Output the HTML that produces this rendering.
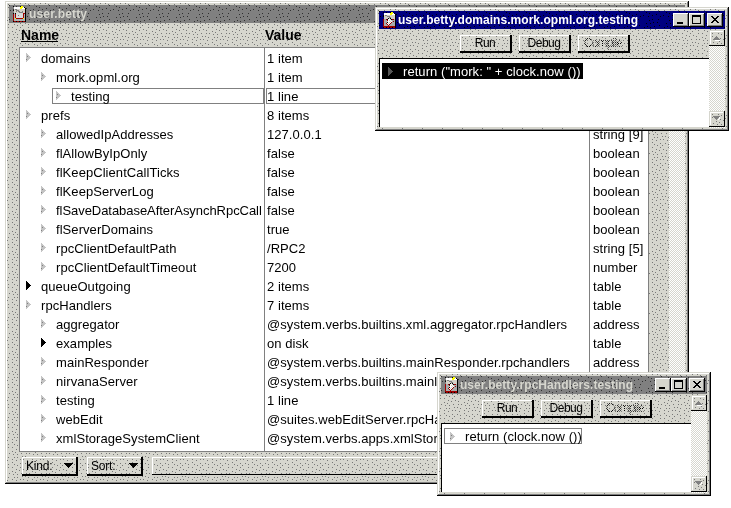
<!DOCTYPE html><html><head><meta charset="utf-8"><style>html,body{margin:0;padding:0;background:#fff;width:731px;height:508px;overflow:hidden;position:relative}div,svg{position:absolute}</style></head><body><svg width="0" height="0" style="position:absolute"><defs><pattern id="pf" width="20" height="20" patternUnits="userSpaceOnUse"><rect width="20" height="20" fill="#d6d6ce"/><g fill="#777777"><rect x="7" y="18" width="1" height="1"/><rect x="17" y="4" width="1" height="1"/><rect x="11" y="19" width="1" height="1"/><rect x="15" y="18" width="1" height="1"/><rect x="2" y="19" width="1" height="1"/><rect x="0" y="15" width="1" height="1"/><rect x="7" y="6" width="1" height="1"/><rect x="17" y="15" width="1" height="1"/><rect x="12" y="4" width="1" height="1"/><rect x="16" y="12" width="1" height="1"/><rect x="0" y="2" width="1" height="1"/><rect x="1" y="9" width="1" height="1"/><rect x="12" y="13" width="1" height="1"/><rect x="15" y="6" width="1" height="1"/><rect x="8" y="13" width="1" height="1"/><rect x="7" y="10" width="1" height="1"/><rect x="18" y="18" width="1" height="1"/><rect x="3" y="6" width="1" height="1"/><rect x="18" y="8" width="1" height="1"/><rect x="9" y="3" width="1" height="1"/><rect x="15" y="2" width="1" height="1"/><rect x="1" y="12" width="1" height="1"/><rect x="10" y="11" width="1" height="1"/><rect x="4" y="12" width="1" height="1"/><rect x="11" y="8" width="1" height="1"/><rect x="14" y="9" width="1" height="1"/><rect x="9" y="16" width="1" height="1"/><rect x="3" y="3" width="1" height="1"/><rect x="7" y="1" width="1" height="1"/><rect x="3" y="16" width="1" height="1"/><rect x="12" y="16" width="1" height="1"/></g></pattern><pattern id="pg" width="20" height="20" patternUnits="userSpaceOnUse"><rect width="20" height="20" fill="#808080"/><g fill="#303030"><rect x="19" y="8" width="1" height="1"/><rect x="11" y="16" width="1" height="1"/><rect x="0" y="14" width="1" height="1"/><rect x="7" y="1" width="1" height="1"/><rect x="7" y="12" width="1" height="1"/><rect x="17" y="3" width="1" height="1"/><rect x="13" y="8" width="1" height="1"/><rect x="4" y="19" width="1" height="1"/><rect x="4" y="4" width="1" height="1"/><rect x="0" y="0" width="1" height="1"/><rect x="10" y="9" width="1" height="1"/><rect x="10" y="2" width="1" height="1"/><rect x="15" y="15" width="1" height="1"/><rect x="11" y="12" width="1" height="1"/><rect x="1" y="5" width="1" height="1"/><rect x="14" y="11" width="1" height="1"/><rect x="18" y="11" width="1" height="1"/><rect x="16" y="19" width="1" height="1"/><rect x="9" y="5" width="1" height="1"/><rect x="13" y="4" width="1" height="1"/><rect x="5" y="16" width="1" height="1"/><rect x="8" y="15" width="1" height="1"/></g></pattern><pattern id="pb" width="20" height="20" patternUnits="userSpaceOnUse"><rect width="20" height="20" fill="#000080"/><g fill="#000000"><rect x="19" y="8" width="1" height="1"/><rect x="11" y="16" width="1" height="1"/><rect x="0" y="14" width="1" height="1"/><rect x="7" y="1" width="1" height="1"/><rect x="7" y="12" width="1" height="1"/><rect x="17" y="3" width="1" height="1"/><rect x="13" y="8" width="1" height="1"/><rect x="4" y="19" width="1" height="1"/><rect x="4" y="4" width="1" height="1"/><rect x="0" y="0" width="1" height="1"/><rect x="10" y="9" width="1" height="1"/><rect x="10" y="2" width="1" height="1"/><rect x="15" y="15" width="1" height="1"/><rect x="11" y="12" width="1" height="1"/><rect x="1" y="5" width="1" height="1"/><rect x="14" y="11" width="1" height="1"/><rect x="18" y="11" width="1" height="1"/><rect x="16" y="19" width="1" height="1"/><rect x="9" y="5" width="1" height="1"/><rect x="13" y="4" width="1" height="1"/><rect x="5" y="16" width="1" height="1"/><rect x="8" y="15" width="1" height="1"/></g></pattern><pattern id="pc" width="2" height="2" patternUnits="userSpaceOnUse"><rect width="2" height="2" fill="#ffffff"/><rect x="1" y="0" width="1" height="1" fill="#d6d6ce"/><rect x="0" y="1" width="1" height="1" fill="#d6d6ce"/></pattern></defs></svg><svg style="position:absolute;left:5px;top:1px" width="684" height="483" shape-rendering="crispEdges"><rect width="684" height="483" fill="url(#pf)"/></svg><div style="position:absolute;left:5px;top:1px;width:684px;height:1px;background:#d6d6ce"></div><div style="position:absolute;left:5px;top:1px;width:1px;height:483px;background:#d6d6ce"></div><div style="position:absolute;left:6px;top:2px;width:682px;height:1px;background:#fff"></div><div style="position:absolute;left:6px;top:2px;width:1px;height:481px;background:#fff"></div><div style="position:absolute;left:6px;top:482px;width:682px;height:1px;background:#808080"></div><div style="position:absolute;left:687px;top:2px;width:1px;height:481px;background:#808080"></div><div style="position:absolute;left:5px;top:483px;width:684px;height:1px;background:#000"></div><div style="position:absolute;left:688px;top:1px;width:1px;height:483px;background:#000"></div><svg style="position:absolute;left:9px;top:5px" width="676" height="18" shape-rendering="crispEdges"><rect width="676" height="18" fill="url(#pg)"/></svg><svg style="position:absolute;left:13px;top:6px" width="13" height="16" shape-rendering="crispEdges"><rect x="0" y="0" width="1" height="1" fill="#000"/><rect x="7" y="0" width="1" height="1" fill="#000"/><rect x="8" y="0" width="2" height="1" fill="#ffff00"/><rect x="1" y="1" width="6" height="1" fill="#fff"/><rect x="7" y="1" width="3" height="1" fill="#ffff00"/><rect x="10" y="1" width="1" height="1" fill="#fff"/><rect x="11" y="1" width="1" height="1" fill="#000"/><rect x="1" y="2" width="6" height="1" fill="#fff"/><rect x="7" y="2" width="2" height="1" fill="#ffff00"/><rect x="9" y="2" width="3" height="1" fill="#fff"/><rect x="12" y="2" width="1" height="1" fill="#000"/><rect x="1" y="3" width="1" height="1" fill="#d4d0c8"/><rect x="2" y="3" width="2" height="1" fill="#808080"/><rect x="4" y="3" width="8" height="1" fill="#d4d0c8"/><rect x="12" y="3" width="1" height="1" fill="#000"/><rect x="0" y="4" width="1" height="1" fill="#000"/><rect x="1" y="4" width="2" height="1" fill="#d4d0c8"/><rect x="3" y="4" width="3" height="1" fill="#808080"/><rect x="6" y="4" width="6" height="1" fill="#d4d0c8"/><rect x="12" y="4" width="1" height="1" fill="#000"/><rect x="1" y="5" width="2" height="1" fill="#d4d0c8"/><rect x="3" y="5" width="1" height="1" fill="#808080"/><rect x="4" y="5" width="1" height="1" fill="#d4d0c8"/><rect x="5" y="5" width="2" height="1" fill="#808080"/><rect x="7" y="5" width="2" height="1" fill="#d4d0c8"/><rect x="9" y="5" width="1" height="1" fill="#808080"/><rect x="10" y="5" width="2" height="1" fill="#d4d0c8"/><rect x="12" y="5" width="1" height="1" fill="#000"/><rect x="1" y="6" width="5" height="1" fill="#d4d0c8"/><rect x="6" y="6" width="4" height="1" fill="#808080"/><rect x="10" y="6" width="2" height="1" fill="#d4d0c8"/><rect x="12" y="6" width="1" height="1" fill="#000"/><rect x="0" y="7" width="1" height="1" fill="#000"/><rect x="1" y="7" width="1" height="1" fill="#a8b4b4"/><rect x="2" y="7" width="1" height="1" fill="#000"/><rect x="3" y="7" width="7" height="1" fill="#d8dcdc"/><rect x="10" y="7" width="2" height="1" fill="#a00000"/><rect x="12" y="7" width="1" height="1" fill="#000"/><rect x="0" y="8" width="1" height="1" fill="#a00000"/><rect x="1" y="8" width="1" height="1" fill="#a8b4b4"/><rect x="2" y="8" width="1" height="1" fill="#a00000"/><rect x="3" y="8" width="7" height="1" fill="#d8dcdc"/><rect x="10" y="8" width="1" height="1" fill="#a00000"/><rect x="11" y="8" width="1" height="1" fill="#a8b4b4"/><rect x="12" y="8" width="1" height="1" fill="#000"/><rect x="0" y="9" width="1" height="1" fill="#a00000"/><rect x="1" y="9" width="1" height="1" fill="#a8b4b4"/><rect x="2" y="9" width="1" height="1" fill="#a00000"/><rect x="3" y="9" width="2" height="1" fill="#d8dcdc"/><rect x="5" y="9" width="1" height="1" fill="#808080"/><rect x="6" y="9" width="4" height="1" fill="#d8dcdc"/><rect x="10" y="9" width="1" height="1" fill="#a00000"/><rect x="11" y="9" width="1" height="1" fill="#a8b4b4"/><rect x="12" y="9" width="1" height="1" fill="#000"/><rect x="0" y="10" width="1" height="1" fill="#a00000"/><rect x="1" y="10" width="1" height="1" fill="#a8b4b4"/><rect x="2" y="10" width="1" height="1" fill="#a00000"/><rect x="3" y="10" width="7" height="1" fill="#d8dcdc"/><rect x="10" y="10" width="1" height="1" fill="#a00000"/><rect x="11" y="10" width="1" height="1" fill="#a8b4b4"/><rect x="12" y="10" width="1" height="1" fill="#000"/><rect x="0" y="11" width="1" height="1" fill="#a00000"/><rect x="1" y="11" width="1" height="1" fill="#a8b4b4"/><rect x="2" y="11" width="1" height="1" fill="#a00000"/><rect x="3" y="11" width="7" height="1" fill="#d8dcdc"/><rect x="10" y="11" width="1" height="1" fill="#a00000"/><rect x="11" y="11" width="1" height="1" fill="#a8b4b4"/><rect x="12" y="11" width="1" height="1" fill="#000"/><rect x="0" y="12" width="1" height="1" fill="#a00000"/><rect x="1" y="12" width="1" height="1" fill="#a8b4b4"/><rect x="2" y="12" width="1" height="1" fill="#ffff00"/><rect x="3" y="12" width="7" height="1" fill="#a00000"/><rect x="10" y="12" width="1" height="1" fill="#ffff00"/><rect x="11" y="12" width="1" height="1" fill="#a8b4b4"/><rect x="12" y="12" width="1" height="1" fill="#000"/><rect x="0" y="13" width="1" height="1" fill="#a00000"/><rect x="1" y="13" width="11" height="1" fill="#a8b4b4"/><rect x="12" y="13" width="1" height="1" fill="#000"/><rect x="0" y="14" width="1" height="1" fill="#a00000"/><rect x="1" y="14" width="11" height="1" fill="#a8b4b4"/><rect x="12" y="14" width="1" height="1" fill="#000"/><rect x="0" y="15" width="1" height="1" fill="#000"/><rect x="1" y="15" width="2" height="1" fill="#a00000"/><rect x="3" y="15" width="1" height="1" fill="#000"/><rect x="4" y="15" width="2" height="1" fill="#a00000"/><rect x="6" y="15" width="1" height="1" fill="#000"/><rect x="7" y="15" width="2" height="1" fill="#a00000"/><rect x="9" y="15" width="1" height="1" fill="#000"/><rect x="10" y="15" width="2" height="1" fill="#a00000"/><rect x="12" y="15" width="1" height="1" fill="#000"/></svg><div style="position:absolute;left:29px;top:7px;line-height:12px;white-space:nowrap;will-change:transform;font:bold 12px 'Liberation Sans',sans-serif;color:#d6d6ce;letter-spacing:0.15px">user.betty</div><div style="position:absolute;left:21px;top:27px;line-height:14px;white-space:nowrap;will-change:transform;font:bold 14px 'Liberation Sans',sans-serif;color:#000;">Name</div><div style="position:absolute;left:21px;top:41px;width:37px;height:1px;background:#000"></div><div style="position:absolute;left:265px;top:27px;line-height:14px;white-space:nowrap;will-change:transform;font:bold 14px 'Liberation Sans',sans-serif;color:#000;">Value</div><div style="position:absolute;left:593px;top:27px;line-height:14px;white-space:nowrap;will-change:transform;font:bold 14px 'Liberation Sans',sans-serif;color:#000;">Kind</div><div style="position:absolute;left:19px;top:47px;width:630px;height:405px;box-sizing:border-box;background:#fff;border:1px solid #808080"></div><div style="position:absolute;left:264px;top:48px;width:1px;height:403px;background:#808080"></div><div style="position:absolute;left:589px;top:48px;width:1px;height:403px;background:#808080"></div><svg style="position:absolute;left:26px;top:53px" width="5" height="9" shape-rendering="crispEdges"><path fill="#c4c4c4" d="M0 0h1v9h-1zM1 1h1v7h-1zM2 2h1v5h-1zM3 3h1v3h-1zM4 4h1v1h-1z"/><path fill="#808080" d="M1 3h1v1h-1zM0 6h1v1h-1z"/></svg><div style="position:absolute;left:41px;top:51px;line-height:13px;white-space:nowrap;will-change:transform;font:normal 13px 'Liberation Sans',sans-serif;color:#000;letter-spacing:0.06px;">domains</div><div style="position:absolute;left:267px;top:51px;line-height:13px;white-space:nowrap;will-change:transform;font:normal 13px 'Liberation Sans',sans-serif;color:#000;letter-spacing:0.06px;">1 item</div><div style="position:absolute;left:593px;top:51px;line-height:13px;white-space:nowrap;will-change:transform;font:normal 13px 'Liberation Sans',sans-serif;color:#000;letter-spacing:0.06px;"></div><svg style="position:absolute;left:41px;top:72px" width="5" height="9" shape-rendering="crispEdges"><path fill="#c4c4c4" d="M0 0h1v9h-1zM1 1h1v7h-1zM2 2h1v5h-1zM3 3h1v3h-1zM4 4h1v1h-1z"/><path fill="#808080" d="M1 3h1v1h-1zM0 6h1v1h-1z"/></svg><div style="position:absolute;left:56px;top:70px;line-height:13px;white-space:nowrap;will-change:transform;font:normal 13px 'Liberation Sans',sans-serif;color:#000;letter-spacing:0.06px;">mork.opml.org</div><div style="position:absolute;left:267px;top:70px;line-height:13px;white-space:nowrap;will-change:transform;font:normal 13px 'Liberation Sans',sans-serif;color:#000;letter-spacing:0.06px;">1 item</div><div style="position:absolute;left:593px;top:70px;line-height:13px;white-space:nowrap;will-change:transform;font:normal 13px 'Liberation Sans',sans-serif;color:#000;letter-spacing:0.06px;"></div><div style="position:absolute;left:52px;top:88px;width:212px;height:16px;box-sizing:border-box;border:1px solid #808080"></div><div style="position:absolute;left:266px;top:88px;width:323px;height:16px;box-sizing:border-box;border:1px solid #808080"></div><svg style="position:absolute;left:56px;top:91px" width="5" height="9" shape-rendering="crispEdges"><path fill="#c4c4c4" d="M0 0h1v9h-1zM1 1h1v7h-1zM2 2h1v5h-1zM3 3h1v3h-1zM4 4h1v1h-1z"/><path fill="#808080" d="M1 3h1v1h-1zM0 6h1v1h-1z"/></svg><div style="position:absolute;left:71px;top:89px;line-height:13px;white-space:nowrap;will-change:transform;font:normal 13px 'Liberation Sans',sans-serif;color:#000;letter-spacing:0.06px;">testing</div><div style="position:absolute;left:267px;top:89px;line-height:13px;white-space:nowrap;will-change:transform;font:normal 13px 'Liberation Sans',sans-serif;color:#000;letter-spacing:0.06px;">1 line</div><div style="position:absolute;left:593px;top:89px;line-height:13px;white-space:nowrap;will-change:transform;font:normal 13px 'Liberation Sans',sans-serif;color:#000;letter-spacing:0.06px;"></div><svg style="position:absolute;left:26px;top:110px" width="5" height="9" shape-rendering="crispEdges"><path fill="#c4c4c4" d="M0 0h1v9h-1zM1 1h1v7h-1zM2 2h1v5h-1zM3 3h1v3h-1zM4 4h1v1h-1z"/><path fill="#808080" d="M1 3h1v1h-1zM0 6h1v1h-1z"/></svg><div style="position:absolute;left:41px;top:108px;line-height:13px;white-space:nowrap;will-change:transform;font:normal 13px 'Liberation Sans',sans-serif;color:#000;letter-spacing:0.06px;">prefs</div><div style="position:absolute;left:267px;top:108px;line-height:13px;white-space:nowrap;will-change:transform;font:normal 13px 'Liberation Sans',sans-serif;color:#000;letter-spacing:0.06px;">8 items</div><div style="position:absolute;left:593px;top:108px;line-height:13px;white-space:nowrap;will-change:transform;font:normal 13px 'Liberation Sans',sans-serif;color:#000;letter-spacing:0.06px;"></div><svg style="position:absolute;left:41px;top:129px" width="5" height="9" shape-rendering="crispEdges"><path fill="#c4c4c4" d="M0 0h1v9h-1zM1 1h1v7h-1zM2 2h1v5h-1zM3 3h1v3h-1zM4 4h1v1h-1z"/><path fill="#808080" d="M1 3h1v1h-1zM0 6h1v1h-1z"/></svg><div style="position:absolute;left:56px;top:127px;line-height:13px;white-space:nowrap;will-change:transform;font:normal 13px 'Liberation Sans',sans-serif;color:#000;letter-spacing:0.06px;">allowedIpAddresses</div><div style="position:absolute;left:267px;top:127px;line-height:13px;white-space:nowrap;will-change:transform;font:normal 13px 'Liberation Sans',sans-serif;color:#000;letter-spacing:0.06px;">127.0.0.1</div><div style="position:absolute;left:593px;top:127px;line-height:13px;white-space:nowrap;will-change:transform;font:normal 13px 'Liberation Sans',sans-serif;color:#000;letter-spacing:0.06px;">string [9]</div><svg style="position:absolute;left:41px;top:148px" width="5" height="9" shape-rendering="crispEdges"><path fill="#c4c4c4" d="M0 0h1v9h-1zM1 1h1v7h-1zM2 2h1v5h-1zM3 3h1v3h-1zM4 4h1v1h-1z"/><path fill="#808080" d="M1 3h1v1h-1zM0 6h1v1h-1z"/></svg><div style="position:absolute;left:56px;top:146px;line-height:13px;white-space:nowrap;will-change:transform;font:normal 13px 'Liberation Sans',sans-serif;color:#000;letter-spacing:0.06px;">flAllowByIpOnly</div><div style="position:absolute;left:267px;top:146px;line-height:13px;white-space:nowrap;will-change:transform;font:normal 13px 'Liberation Sans',sans-serif;color:#000;letter-spacing:0.06px;">false</div><div style="position:absolute;left:593px;top:146px;line-height:13px;white-space:nowrap;will-change:transform;font:normal 13px 'Liberation Sans',sans-serif;color:#000;letter-spacing:0.06px;">boolean</div><svg style="position:absolute;left:41px;top:167px" width="5" height="9" shape-rendering="crispEdges"><path fill="#c4c4c4" d="M0 0h1v9h-1zM1 1h1v7h-1zM2 2h1v5h-1zM3 3h1v3h-1zM4 4h1v1h-1z"/><path fill="#808080" d="M1 3h1v1h-1zM0 6h1v1h-1z"/></svg><div style="position:absolute;left:56px;top:165px;line-height:13px;white-space:nowrap;will-change:transform;font:normal 13px 'Liberation Sans',sans-serif;color:#000;letter-spacing:0.06px;">flKeepClientCallTicks</div><div style="position:absolute;left:267px;top:165px;line-height:13px;white-space:nowrap;will-change:transform;font:normal 13px 'Liberation Sans',sans-serif;color:#000;letter-spacing:0.06px;">false</div><div style="position:absolute;left:593px;top:165px;line-height:13px;white-space:nowrap;will-change:transform;font:normal 13px 'Liberation Sans',sans-serif;color:#000;letter-spacing:0.06px;">boolean</div><svg style="position:absolute;left:41px;top:186px" width="5" height="9" shape-rendering="crispEdges"><path fill="#c4c4c4" d="M0 0h1v9h-1zM1 1h1v7h-1zM2 2h1v5h-1zM3 3h1v3h-1zM4 4h1v1h-1z"/><path fill="#808080" d="M1 3h1v1h-1zM0 6h1v1h-1z"/></svg><div style="position:absolute;left:56px;top:184px;line-height:13px;white-space:nowrap;will-change:transform;font:normal 13px 'Liberation Sans',sans-serif;color:#000;letter-spacing:0.06px;">flKeepServerLog</div><div style="position:absolute;left:267px;top:184px;line-height:13px;white-space:nowrap;will-change:transform;font:normal 13px 'Liberation Sans',sans-serif;color:#000;letter-spacing:0.06px;">false</div><div style="position:absolute;left:593px;top:184px;line-height:13px;white-space:nowrap;will-change:transform;font:normal 13px 'Liberation Sans',sans-serif;color:#000;letter-spacing:0.06px;">boolean</div><svg style="position:absolute;left:41px;top:205px" width="5" height="9" shape-rendering="crispEdges"><path fill="#c4c4c4" d="M0 0h1v9h-1zM1 1h1v7h-1zM2 2h1v5h-1zM3 3h1v3h-1zM4 4h1v1h-1z"/><path fill="#808080" d="M1 3h1v1h-1zM0 6h1v1h-1z"/></svg><div style="position:absolute;left:56px;top:203px;line-height:13px;white-space:nowrap;will-change:transform;font:normal 13px 'Liberation Sans',sans-serif;color:#000;letter-spacing:0.06px;letter-spacing:-0.05px;">flSaveDatabaseAfterAsynchRpcCall</div><div style="position:absolute;left:267px;top:203px;line-height:13px;white-space:nowrap;will-change:transform;font:normal 13px 'Liberation Sans',sans-serif;color:#000;letter-spacing:0.06px;">false</div><div style="position:absolute;left:593px;top:203px;line-height:13px;white-space:nowrap;will-change:transform;font:normal 13px 'Liberation Sans',sans-serif;color:#000;letter-spacing:0.06px;">boolean</div><svg style="position:absolute;left:41px;top:224px" width="5" height="9" shape-rendering="crispEdges"><path fill="#c4c4c4" d="M0 0h1v9h-1zM1 1h1v7h-1zM2 2h1v5h-1zM3 3h1v3h-1zM4 4h1v1h-1z"/><path fill="#808080" d="M1 3h1v1h-1zM0 6h1v1h-1z"/></svg><div style="position:absolute;left:56px;top:222px;line-height:13px;white-space:nowrap;will-change:transform;font:normal 13px 'Liberation Sans',sans-serif;color:#000;letter-spacing:0.06px;">flServerDomains</div><div style="position:absolute;left:267px;top:222px;line-height:13px;white-space:nowrap;will-change:transform;font:normal 13px 'Liberation Sans',sans-serif;color:#000;letter-spacing:0.06px;">true</div><div style="position:absolute;left:593px;top:222px;line-height:13px;white-space:nowrap;will-change:transform;font:normal 13px 'Liberation Sans',sans-serif;color:#000;letter-spacing:0.06px;">boolean</div><svg style="position:absolute;left:41px;top:243px" width="5" height="9" shape-rendering="crispEdges"><path fill="#c4c4c4" d="M0 0h1v9h-1zM1 1h1v7h-1zM2 2h1v5h-1zM3 3h1v3h-1zM4 4h1v1h-1z"/><path fill="#808080" d="M1 3h1v1h-1zM0 6h1v1h-1z"/></svg><div style="position:absolute;left:56px;top:241px;line-height:13px;white-space:nowrap;will-change:transform;font:normal 13px 'Liberation Sans',sans-serif;color:#000;letter-spacing:0.06px;">rpcClientDefaultPath</div><div style="position:absolute;left:267px;top:241px;line-height:13px;white-space:nowrap;will-change:transform;font:normal 13px 'Liberation Sans',sans-serif;color:#000;letter-spacing:0.06px;">/RPC2</div><div style="position:absolute;left:593px;top:241px;line-height:13px;white-space:nowrap;will-change:transform;font:normal 13px 'Liberation Sans',sans-serif;color:#000;letter-spacing:0.06px;">string [5]</div><svg style="position:absolute;left:41px;top:262px" width="5" height="9" shape-rendering="crispEdges"><path fill="#c4c4c4" d="M0 0h1v9h-1zM1 1h1v7h-1zM2 2h1v5h-1zM3 3h1v3h-1zM4 4h1v1h-1z"/><path fill="#808080" d="M1 3h1v1h-1zM0 6h1v1h-1z"/></svg><div style="position:absolute;left:56px;top:260px;line-height:13px;white-space:nowrap;will-change:transform;font:normal 13px 'Liberation Sans',sans-serif;color:#000;letter-spacing:0.06px;">rpcClientDefaultTimeout</div><div style="position:absolute;left:267px;top:260px;line-height:13px;white-space:nowrap;will-change:transform;font:normal 13px 'Liberation Sans',sans-serif;color:#000;letter-spacing:0.06px;">7200</div><div style="position:absolute;left:593px;top:260px;line-height:13px;white-space:nowrap;will-change:transform;font:normal 13px 'Liberation Sans',sans-serif;color:#000;letter-spacing:0.06px;">number</div><svg style="position:absolute;left:26px;top:281px" width="5" height="9" shape-rendering="crispEdges"><path fill="#000" d="M0 0h1v9h-1zM1 1h1v7h-1zM2 2h1v5h-1zM3 3h1v3h-1zM4 4h1v1h-1z"/></svg><div style="position:absolute;left:41px;top:279px;line-height:13px;white-space:nowrap;will-change:transform;font:normal 13px 'Liberation Sans',sans-serif;color:#000;letter-spacing:0.06px;">queueOutgoing</div><div style="position:absolute;left:267px;top:279px;line-height:13px;white-space:nowrap;will-change:transform;font:normal 13px 'Liberation Sans',sans-serif;color:#000;letter-spacing:0.06px;">2 items</div><div style="position:absolute;left:593px;top:279px;line-height:13px;white-space:nowrap;will-change:transform;font:normal 13px 'Liberation Sans',sans-serif;color:#000;letter-spacing:0.06px;">table</div><svg style="position:absolute;left:26px;top:300px" width="5" height="9" shape-rendering="crispEdges"><path fill="#c4c4c4" d="M0 0h1v9h-1zM1 1h1v7h-1zM2 2h1v5h-1zM3 3h1v3h-1zM4 4h1v1h-1z"/><path fill="#808080" d="M1 3h1v1h-1zM0 6h1v1h-1z"/></svg><div style="position:absolute;left:41px;top:298px;line-height:13px;white-space:nowrap;will-change:transform;font:normal 13px 'Liberation Sans',sans-serif;color:#000;letter-spacing:0.06px;">rpcHandlers</div><div style="position:absolute;left:267px;top:298px;line-height:13px;white-space:nowrap;will-change:transform;font:normal 13px 'Liberation Sans',sans-serif;color:#000;letter-spacing:0.06px;">7 items</div><div style="position:absolute;left:593px;top:298px;line-height:13px;white-space:nowrap;will-change:transform;font:normal 13px 'Liberation Sans',sans-serif;color:#000;letter-spacing:0.06px;">table</div><svg style="position:absolute;left:41px;top:319px" width="5" height="9" shape-rendering="crispEdges"><path fill="#c4c4c4" d="M0 0h1v9h-1zM1 1h1v7h-1zM2 2h1v5h-1zM3 3h1v3h-1zM4 4h1v1h-1z"/><path fill="#808080" d="M1 3h1v1h-1zM0 6h1v1h-1z"/></svg><div style="position:absolute;left:56px;top:317px;line-height:13px;white-space:nowrap;will-change:transform;font:normal 13px 'Liberation Sans',sans-serif;color:#000;letter-spacing:0.06px;">aggregator</div><div style="position:absolute;left:267px;top:317px;line-height:13px;white-space:nowrap;will-change:transform;font:normal 13px 'Liberation Sans',sans-serif;color:#000;letter-spacing:0.06px;">@system.verbs.builtins.xml.aggregator.rpcHandlers</div><div style="position:absolute;left:593px;top:317px;line-height:13px;white-space:nowrap;will-change:transform;font:normal 13px 'Liberation Sans',sans-serif;color:#000;letter-spacing:0.06px;">address</div><svg style="position:absolute;left:41px;top:338px" width="5" height="9" shape-rendering="crispEdges"><path fill="#000" d="M0 0h1v9h-1zM1 1h1v7h-1zM2 2h1v5h-1zM3 3h1v3h-1zM4 4h1v1h-1z"/></svg><div style="position:absolute;left:56px;top:336px;line-height:13px;white-space:nowrap;will-change:transform;font:normal 13px 'Liberation Sans',sans-serif;color:#000;letter-spacing:0.06px;">examples</div><div style="position:absolute;left:267px;top:336px;line-height:13px;white-space:nowrap;will-change:transform;font:normal 13px 'Liberation Sans',sans-serif;color:#000;letter-spacing:0.06px;">on disk</div><div style="position:absolute;left:593px;top:336px;line-height:13px;white-space:nowrap;will-change:transform;font:normal 13px 'Liberation Sans',sans-serif;color:#000;letter-spacing:0.06px;">table</div><svg style="position:absolute;left:41px;top:357px" width="5" height="9" shape-rendering="crispEdges"><path fill="#c4c4c4" d="M0 0h1v9h-1zM1 1h1v7h-1zM2 2h1v5h-1zM3 3h1v3h-1zM4 4h1v1h-1z"/><path fill="#808080" d="M1 3h1v1h-1zM0 6h1v1h-1z"/></svg><div style="position:absolute;left:56px;top:355px;line-height:13px;white-space:nowrap;will-change:transform;font:normal 13px 'Liberation Sans',sans-serif;color:#000;letter-spacing:0.06px;">mainResponder</div><div style="position:absolute;left:267px;top:355px;line-height:13px;white-space:nowrap;will-change:transform;font:normal 13px 'Liberation Sans',sans-serif;color:#000;letter-spacing:0.06px;">@system.verbs.builtins.mainResponder.rpchandlers</div><div style="position:absolute;left:593px;top:355px;line-height:13px;white-space:nowrap;will-change:transform;font:normal 13px 'Liberation Sans',sans-serif;color:#000;letter-spacing:0.06px;">address</div><svg style="position:absolute;left:41px;top:376px" width="5" height="9" shape-rendering="crispEdges"><path fill="#c4c4c4" d="M0 0h1v9h-1zM1 1h1v7h-1zM2 2h1v5h-1zM3 3h1v3h-1zM4 4h1v1h-1z"/><path fill="#808080" d="M1 3h1v1h-1zM0 6h1v1h-1z"/></svg><div style="position:absolute;left:56px;top:374px;line-height:13px;white-space:nowrap;will-change:transform;font:normal 13px 'Liberation Sans',sans-serif;color:#000;letter-spacing:0.06px;">nirvanaServer</div><div style="position:absolute;left:267px;top:374px;line-height:13px;white-space:nowrap;will-change:transform;font:normal 13px 'Liberation Sans',sans-serif;color:#000;letter-spacing:0.06px;">@system.verbs.builtins.mainl</div><div style="position:absolute;left:593px;top:374px;line-height:13px;white-space:nowrap;will-change:transform;font:normal 13px 'Liberation Sans',sans-serif;color:#000;letter-spacing:0.06px;">address</div><svg style="position:absolute;left:41px;top:395px" width="5" height="9" shape-rendering="crispEdges"><path fill="#c4c4c4" d="M0 0h1v9h-1zM1 1h1v7h-1zM2 2h1v5h-1zM3 3h1v3h-1zM4 4h1v1h-1z"/><path fill="#808080" d="M1 3h1v1h-1zM0 6h1v1h-1z"/></svg><div style="position:absolute;left:56px;top:393px;line-height:13px;white-space:nowrap;will-change:transform;font:normal 13px 'Liberation Sans',sans-serif;color:#000;letter-spacing:0.06px;">testing</div><div style="position:absolute;left:267px;top:393px;line-height:13px;white-space:nowrap;will-change:transform;font:normal 13px 'Liberation Sans',sans-serif;color:#000;letter-spacing:0.06px;">1 line</div><div style="position:absolute;left:593px;top:393px;line-height:13px;white-space:nowrap;will-change:transform;font:normal 13px 'Liberation Sans',sans-serif;color:#000;letter-spacing:0.06px;">string</div><svg style="position:absolute;left:41px;top:414px" width="5" height="9" shape-rendering="crispEdges"><path fill="#c4c4c4" d="M0 0h1v9h-1zM1 1h1v7h-1zM2 2h1v5h-1zM3 3h1v3h-1zM4 4h1v1h-1z"/><path fill="#808080" d="M1 3h1v1h-1zM0 6h1v1h-1z"/></svg><div style="position:absolute;left:56px;top:412px;line-height:13px;white-space:nowrap;will-change:transform;font:normal 13px 'Liberation Sans',sans-serif;color:#000;letter-spacing:0.06px;">webEdit</div><div style="position:absolute;left:267px;top:412px;line-height:13px;white-space:nowrap;will-change:transform;font:normal 13px 'Liberation Sans',sans-serif;color:#000;letter-spacing:0.06px;">@suites.webEditServer.rpcHandlers</div><div style="position:absolute;left:593px;top:412px;line-height:13px;white-space:nowrap;will-change:transform;font:normal 13px 'Liberation Sans',sans-serif;color:#000;letter-spacing:0.06px;">address</div><svg style="position:absolute;left:41px;top:433px" width="5" height="9" shape-rendering="crispEdges"><path fill="#c4c4c4" d="M0 0h1v9h-1zM1 1h1v7h-1zM2 2h1v5h-1zM3 3h1v3h-1zM4 4h1v1h-1z"/><path fill="#808080" d="M1 3h1v1h-1zM0 6h1v1h-1z"/></svg><div style="position:absolute;left:56px;top:431px;line-height:13px;white-space:nowrap;will-change:transform;font:normal 13px 'Liberation Sans',sans-serif;color:#000;letter-spacing:0.06px;">xmlStorageSystemClient</div><div style="position:absolute;left:267px;top:431px;line-height:13px;white-space:nowrap;will-change:transform;font:normal 13px 'Liberation Sans',sans-serif;color:#000;letter-spacing:0.06px;">@system.verbs.apps.xmlStorageSystem.rpcHandlers</div><div style="position:absolute;left:593px;top:431px;line-height:13px;white-space:nowrap;will-change:transform;font:normal 13px 'Liberation Sans',sans-serif;color:#000;letter-spacing:0.06px;">address</div><svg style="position:absolute;left:669px;top:23px" width="16" height="429" shape-rendering="crispEdges"><rect width="16" height="429" fill="url(#pc)"/></svg><div style="position:absolute;left:22px;top:457px;width:54px;height:1px;background:#fff"></div><div style="position:absolute;left:22px;top:457px;width:1px;height:17px;background:#fff"></div><div style="position:absolute;left:76px;top:457px;width:2px;height:19px;background:#000"></div><div style="position:absolute;left:22px;top:474px;width:56px;height:2px;background:#000"></div><div style="position:absolute;left:26px;top:459px;line-height:12px;white-space:nowrap;will-change:transform;font:normal 12px 'Liberation Sans',sans-serif;color:#000;letter-spacing:-0.2px">Kind:</div><svg style="position:absolute;left:64px;top:463px" width="9" height="5" shape-rendering="crispEdges"><path fill="#000" d="M0 0h9v1h-9zM1 1h7v1h-7zM2 2h5v1h-5zM3 3h3v1h-3zM4 4h1v1h-1z"/></svg><div style="position:absolute;left:87px;top:457px;width:54px;height:1px;background:#fff"></div><div style="position:absolute;left:87px;top:457px;width:1px;height:17px;background:#fff"></div><div style="position:absolute;left:141px;top:457px;width:2px;height:19px;background:#000"></div><div style="position:absolute;left:87px;top:474px;width:56px;height:2px;background:#000"></div><div style="position:absolute;left:91px;top:459px;line-height:12px;white-space:nowrap;will-change:transform;font:normal 12px 'Liberation Sans',sans-serif;color:#000;letter-spacing:-0.2px">Sort:</div><svg style="position:absolute;left:129px;top:463px" width="9" height="5" shape-rendering="crispEdges"><path fill="#000" d="M0 0h9v1h-9zM1 1h7v1h-7zM2 2h5v1h-5zM3 3h3v1h-3zM4 4h1v1h-1z"/></svg><div style="position:absolute;left:152px;top:457px;width:536px;height:1px;background:#fff"></div><div style="position:absolute;left:152px;top:457px;width:1px;height:18px;background:#fff"></div><div style="position:absolute;left:152px;top:474px;width:536px;height:1px;background:#000"></div><svg style="position:absolute;left:375px;top:7px" width="354" height="124" shape-rendering="crispEdges"><rect width="354" height="124" fill="url(#pf)"/></svg><div style="position:absolute;left:375px;top:7px;width:354px;height:1px;background:#d6d6ce"></div><div style="position:absolute;left:375px;top:7px;width:1px;height:124px;background:#d6d6ce"></div><div style="position:absolute;left:376px;top:8px;width:352px;height:1px;background:#fff"></div><div style="position:absolute;left:376px;top:8px;width:1px;height:122px;background:#fff"></div><div style="position:absolute;left:376px;top:129px;width:352px;height:1px;background:#808080"></div><div style="position:absolute;left:727px;top:8px;width:1px;height:122px;background:#808080"></div><div style="position:absolute;left:375px;top:130px;width:354px;height:1px;background:#000"></div><div style="position:absolute;left:728px;top:7px;width:1px;height:124px;background:#000"></div><svg style="position:absolute;left:379px;top:11px" width="346" height="18" shape-rendering="crispEdges"><rect width="346" height="18" fill="url(#pb)"/></svg><svg style="position:absolute;left:383px;top:12px" width="13" height="16" shape-rendering="crispEdges"><rect x="0" y="0" width="1" height="1" fill="#000"/><rect x="7" y="0" width="1" height="1" fill="#000"/><rect x="8" y="0" width="2" height="1" fill="#ffff00"/><rect x="1" y="1" width="6" height="1" fill="#fff"/><rect x="7" y="1" width="3" height="1" fill="#ffff00"/><rect x="10" y="1" width="1" height="1" fill="#fff"/><rect x="11" y="1" width="1" height="1" fill="#000"/><rect x="1" y="2" width="6" height="1" fill="#fff"/><rect x="7" y="2" width="2" height="1" fill="#ffff00"/><rect x="9" y="2" width="3" height="1" fill="#fff"/><rect x="12" y="2" width="1" height="1" fill="#000"/><rect x="1" y="3" width="1" height="1" fill="#d4d0c8"/><rect x="2" y="3" width="2" height="1" fill="#808080"/><rect x="4" y="3" width="8" height="1" fill="#d4d0c8"/><rect x="12" y="3" width="1" height="1" fill="#000"/><rect x="0" y="4" width="1" height="1" fill="#000"/><rect x="1" y="4" width="3" height="1" fill="#d4d0c8"/><rect x="4" y="4" width="3" height="1" fill="#808080"/><rect x="7" y="4" width="5" height="1" fill="#d4d0c8"/><rect x="12" y="4" width="1" height="1" fill="#000"/><rect x="1" y="5" width="5" height="1" fill="#d4d0c8"/><rect x="6" y="5" width="2" height="1" fill="#808080"/><rect x="8" y="5" width="4" height="1" fill="#d4d0c8"/><rect x="12" y="5" width="1" height="1" fill="#000"/><rect x="1" y="6" width="4" height="1" fill="#d4d0c8"/><rect x="5" y="6" width="1" height="1" fill="#000"/><rect x="6" y="6" width="1" height="1" fill="#d4d0c8"/><rect x="7" y="6" width="1" height="1" fill="#000"/><rect x="8" y="6" width="4" height="1" fill="#d4d0c8"/><rect x="12" y="6" width="1" height="1" fill="#000"/><rect x="0" y="7" width="1" height="1" fill="#a00000"/><rect x="1" y="7" width="2" height="1" fill="#a8acac"/><rect x="3" y="7" width="1" height="1" fill="#a00000"/><rect x="4" y="7" width="1" height="1" fill="#000"/><rect x="5" y="7" width="2" height="1" fill="#fff"/><rect x="7" y="7" width="1" height="1" fill="#d4d0c8"/><rect x="8" y="7" width="1" height="1" fill="#000"/><rect x="9" y="7" width="2" height="1" fill="#a00000"/><rect x="11" y="7" width="1" height="1" fill="#a8acac"/><rect x="12" y="7" width="1" height="1" fill="#000"/><rect x="0" y="8" width="1" height="1" fill="#a00000"/><rect x="1" y="8" width="3" height="1" fill="#a8acac"/><rect x="4" y="8" width="1" height="1" fill="#a00000"/><rect x="5" y="8" width="1" height="1" fill="#fff"/><rect x="6" y="8" width="1" height="1" fill="#d4d0c8"/><rect x="7" y="8" width="1" height="1" fill="#fff"/><rect x="8" y="8" width="1" height="1" fill="#d4d0c8"/><rect x="9" y="8" width="3" height="1" fill="#a8acac"/><rect x="12" y="8" width="1" height="1" fill="#000"/><rect x="0" y="9" width="1" height="1" fill="#a00000"/><rect x="1" y="9" width="3" height="1" fill="#a8acac"/><rect x="4" y="9" width="1" height="1" fill="#d4d0c8"/><rect x="5" y="9" width="2" height="1" fill="#fff"/><rect x="7" y="9" width="1" height="1" fill="#d4d0c8"/><rect x="8" y="9" width="1" height="1" fill="#fff"/><rect x="9" y="9" width="1" height="1" fill="#a8acac"/><rect x="10" y="9" width="1" height="1" fill="#a00000"/><rect x="11" y="9" width="1" height="1" fill="#a8acac"/><rect x="12" y="9" width="1" height="1" fill="#000"/><rect x="0" y="10" width="1" height="1" fill="#a00000"/><rect x="1" y="10" width="3" height="1" fill="#a8acac"/><rect x="4" y="10" width="1" height="1" fill="#000"/><rect x="5" y="10" width="1" height="1" fill="#fff"/><rect x="6" y="10" width="1" height="1" fill="#d4d0c8"/><rect x="7" y="10" width="1" height="1" fill="#fff"/><rect x="8" y="10" width="1" height="1" fill="#a00000"/><rect x="9" y="10" width="3" height="1" fill="#a8acac"/><rect x="12" y="10" width="1" height="1" fill="#000"/><rect x="0" y="11" width="1" height="1" fill="#a00000"/><rect x="1" y="11" width="2" height="1" fill="#a8acac"/><rect x="3" y="11" width="1" height="1" fill="#a00000"/><rect x="4" y="11" width="1" height="1" fill="#fff"/><rect x="5" y="11" width="1" height="1" fill="#d4d0c8"/><rect x="6" y="11" width="1" height="1" fill="#fff"/><rect x="7" y="11" width="1" height="1" fill="#a00000"/><rect x="8" y="11" width="4" height="1" fill="#a8acac"/><rect x="12" y="11" width="1" height="1" fill="#000"/><rect x="0" y="12" width="1" height="1" fill="#a00000"/><rect x="1" y="12" width="3" height="1" fill="#a8acac"/><rect x="4" y="12" width="1" height="1" fill="#a00000"/><rect x="5" y="12" width="1" height="1" fill="#fff"/><rect x="6" y="12" width="1" height="1" fill="#a00000"/><rect x="7" y="12" width="5" height="1" fill="#a8acac"/><rect x="12" y="12" width="1" height="1" fill="#000"/><rect x="0" y="13" width="1" height="1" fill="#a00000"/><rect x="1" y="13" width="4" height="1" fill="#a8acac"/><rect x="5" y="13" width="1" height="1" fill="#a00000"/><rect x="6" y="13" width="6" height="1" fill="#a8acac"/><rect x="12" y="13" width="1" height="1" fill="#000"/><rect x="0" y="14" width="12" height="1" fill="#a00000"/><rect x="12" y="14" width="1" height="1" fill="#000"/><rect x="0" y="15" width="1" height="1" fill="#000"/><rect x="1" y="15" width="2" height="1" fill="#a00000"/><rect x="3" y="15" width="1" height="1" fill="#000"/><rect x="4" y="15" width="2" height="1" fill="#a00000"/><rect x="6" y="15" width="1" height="1" fill="#000"/><rect x="7" y="15" width="2" height="1" fill="#a00000"/><rect x="9" y="15" width="1" height="1" fill="#000"/><rect x="10" y="15" width="2" height="1" fill="#a00000"/><rect x="12" y="15" width="1" height="1" fill="#000"/></svg><div style="position:absolute;left:398px;top:13px;line-height:12px;white-space:nowrap;will-change:transform;font:bold 12px 'Liberation Sans',sans-serif;color:#fff;letter-spacing:0.04px">user.betty.domains.mork.opml.org.testing</div><div style="position:absolute;left:673px;top:13px;width:16px;height:14px;background:#d6d6ce"></div><div style="position:absolute;left:673px;top:13px;width:15px;height:1px;background:#fff"></div><div style="position:absolute;left:673px;top:13px;width:1px;height:13px;background:#fff"></div><div style="position:absolute;left:674px;top:25px;width:14px;height:1px;background:#808080"></div><div style="position:absolute;left:687px;top:14px;width:1px;height:12px;background:#808080"></div><div style="position:absolute;left:673px;top:26px;width:16px;height:1px;background:#000"></div><div style="position:absolute;left:688px;top:13px;width:1px;height:14px;background:#000"></div><div style="position:absolute;left:677px;top:22px;width:6px;height:2px;background:#000"></div><div style="position:absolute;left:689px;top:13px;width:16px;height:14px;background:#d6d6ce"></div><div style="position:absolute;left:689px;top:13px;width:15px;height:1px;background:#fff"></div><div style="position:absolute;left:689px;top:13px;width:1px;height:13px;background:#fff"></div><div style="position:absolute;left:690px;top:25px;width:14px;height:1px;background:#808080"></div><div style="position:absolute;left:703px;top:14px;width:1px;height:12px;background:#808080"></div><div style="position:absolute;left:689px;top:26px;width:16px;height:1px;background:#000"></div><div style="position:absolute;left:704px;top:13px;width:1px;height:14px;background:#000"></div><div style="position:absolute;left:692px;top:15px;width:9px;height:9px;box-sizing:border-box;border:1px solid #000;border-top-width:2px"></div><div style="position:absolute;left:707px;top:13px;width:16px;height:14px;background:#d6d6ce"></div><div style="position:absolute;left:707px;top:13px;width:15px;height:1px;background:#fff"></div><div style="position:absolute;left:707px;top:13px;width:1px;height:13px;background:#fff"></div><div style="position:absolute;left:708px;top:25px;width:14px;height:1px;background:#808080"></div><div style="position:absolute;left:721px;top:14px;width:1px;height:12px;background:#808080"></div><div style="position:absolute;left:707px;top:26px;width:16px;height:1px;background:#000"></div><div style="position:absolute;left:722px;top:13px;width:1px;height:14px;background:#000"></div><svg style="position:absolute;left:711px;top:16px" width="8" height="7" shape-rendering="crispEdges"><path fill="#000" d="M0 0h2v1h-2zM6 0h2v1h-2zM1 1h2v1h-2zM5 1h2v1h-2zM2 2h4v1h-4zM3 3h2v1h-2zM2 4h4v1h-4zM1 5h2v1h-2zM5 5h2v1h-2zM0 6h2v1h-2zM6 6h2v1h-2z"/></svg><div style="position:absolute;left:460px;top:35px;width:50px;height:1px;background:#fff"></div><div style="position:absolute;left:460px;top:35px;width:1px;height:16px;background:#fff"></div><div style="position:absolute;left:510px;top:35px;width:2px;height:18px;background:#000"></div><div style="position:absolute;left:460px;top:51px;width:52px;height:2px;background:#000"></div><div style="position:absolute;left:460px;width:50px;text-align:center;top:36px;line-height:12px;white-space:nowrap;will-change:transform;font:12px 'Liberation Sans',sans-serif;color:#000;letter-spacing:-0.5px">Run</div><div style="position:absolute;left:519px;top:35px;width:50px;height:1px;background:#fff"></div><div style="position:absolute;left:519px;top:35px;width:1px;height:16px;background:#fff"></div><div style="position:absolute;left:569px;top:35px;width:2px;height:18px;background:#000"></div><div style="position:absolute;left:519px;top:51px;width:52px;height:2px;background:#000"></div><div style="position:absolute;left:519px;width:50px;text-align:center;top:36px;line-height:12px;white-space:nowrap;will-change:transform;font:12px 'Liberation Sans',sans-serif;color:#000;letter-spacing:-0.5px">Debug</div><div style="position:absolute;left:578px;top:35px;width:50px;height:1px;background:#fff"></div><div style="position:absolute;left:578px;top:35px;width:1px;height:16px;background:#fff"></div><div style="position:absolute;left:628px;top:35px;width:2px;height:18px;background:#000"></div><div style="position:absolute;left:578px;top:51px;width:52px;height:2px;background:#000"></div><div style="position:absolute;left:578px;width:50px;text-align:center;top:36px;line-height:12px;white-space:nowrap;will-change:transform;font:12px 'Liberation Sans',sans-serif;color:#000;letter-spacing:-0.8px"><span style="color:transparent;background-image:conic-gradient(#000 25%,transparent 0 50%,#000 0 75%,transparent 0);background-size:2px 2px;-webkit-background-clip:text;background-clip:text">Compile</span></div><div style="position:absolute;left:379px;top:58px;width:330px;height:69px;box-sizing:border-box;background:#fff;border-left:1px solid #000;border-top:1px solid #000"></div><svg style="position:absolute;left:709px;top:30px" width="16" height="98" shape-rendering="crispEdges"><rect width="16" height="98" fill="url(#pc)"/></svg><svg style="position:absolute;left:709px;top:30px" width="16" height="16" shape-rendering="crispEdges"><rect width="16" height="16" fill="url(#pf)"/></svg><div style="position:absolute;left:709px;top:30px;width:15px;height:1px;background:#d6d6ce"></div><div style="position:absolute;left:709px;top:30px;width:1px;height:15px;background:#d6d6ce"></div><div style="position:absolute;left:710px;top:31px;width:13px;height:1px;background:#fff"></div><div style="position:absolute;left:710px;top:31px;width:1px;height:13px;background:#fff"></div><div style="position:absolute;left:709px;top:45px;width:16px;height:1px;background:#000"></div><div style="position:absolute;left:724px;top:30px;width:1px;height:16px;background:#000"></div><svg style="position:absolute;left:713px;top:36px" width="7" height="4" shape-rendering="crispEdges"><path fill="#808080" d="M3 0h1v1h-1zM2 1h3v1h-3zM1 2h5v1h-5zM0 3h7v1h-7z"/></svg><div style="position:absolute;left:715px;top:40px;width:5px;height:1px;background:#fff"></div><svg style="position:absolute;left:709px;top:111px" width="16" height="16" shape-rendering="crispEdges"><rect width="16" height="16" fill="url(#pf)"/></svg><div style="position:absolute;left:709px;top:111px;width:15px;height:1px;background:#d6d6ce"></div><div style="position:absolute;left:709px;top:111px;width:1px;height:15px;background:#d6d6ce"></div><div style="position:absolute;left:710px;top:112px;width:13px;height:1px;background:#fff"></div><div style="position:absolute;left:710px;top:112px;width:1px;height:13px;background:#fff"></div><div style="position:absolute;left:709px;top:126px;width:16px;height:1px;background:#000"></div><div style="position:absolute;left:724px;top:111px;width:1px;height:16px;background:#000"></div><svg style="position:absolute;left:713px;top:116px" width="7" height="4" shape-rendering="crispEdges"><path fill="#808080" d="M0 0h7v1h-7zM1 1h5v1h-5zM2 2h3v1h-3zM3 3h1v1h-1z"/></svg><div style="position:absolute;left:719px;top:117px;width:1px;height:2px;background:#fff"></div><div style="position:absolute;left:718px;top:119px;width:1px;height:1px;background:#fff"></div><div style="position:absolute;left:382px;top:63px;width:201px;height:16px;background:#000"></div><svg style="position:absolute;left:388px;top:67px" width="5" height="9" shape-rendering="crispEdges"><path fill="#555" d="M0 0h1v9h-1zM1 1h1v7h-1zM2 2h1v5h-1zM3 3h1v3h-1zM4 4h1v1h-1z"/></svg><div style="position:absolute;left:403px;top:64px;line-height:13px;white-space:nowrap;will-change:transform;font:normal 13px 'Liberation Sans',sans-serif;color:#fff;letter-spacing:0.06px;">return ("mork: " + clock.now ())</div><svg style="position:absolute;left:437px;top:372px" width="274" height="124" shape-rendering="crispEdges"><rect width="274" height="124" fill="url(#pf)"/></svg><div style="position:absolute;left:437px;top:372px;width:274px;height:1px;background:#d6d6ce"></div><div style="position:absolute;left:437px;top:372px;width:1px;height:124px;background:#d6d6ce"></div><div style="position:absolute;left:438px;top:373px;width:272px;height:1px;background:#fff"></div><div style="position:absolute;left:438px;top:373px;width:1px;height:122px;background:#fff"></div><div style="position:absolute;left:438px;top:494px;width:272px;height:1px;background:#808080"></div><div style="position:absolute;left:709px;top:373px;width:1px;height:122px;background:#808080"></div><div style="position:absolute;left:437px;top:495px;width:274px;height:1px;background:#000"></div><div style="position:absolute;left:710px;top:372px;width:1px;height:124px;background:#000"></div><svg style="position:absolute;left:441px;top:376px" width="266" height="18" shape-rendering="crispEdges"><rect width="266" height="18" fill="url(#pg)"/></svg><svg style="position:absolute;left:445px;top:377px" width="13" height="16" shape-rendering="crispEdges"><rect x="0" y="0" width="1" height="1" fill="#000"/><rect x="7" y="0" width="1" height="1" fill="#000"/><rect x="8" y="0" width="2" height="1" fill="#ffff00"/><rect x="1" y="1" width="6" height="1" fill="#fff"/><rect x="7" y="1" width="3" height="1" fill="#ffff00"/><rect x="10" y="1" width="1" height="1" fill="#fff"/><rect x="11" y="1" width="1" height="1" fill="#000"/><rect x="1" y="2" width="6" height="1" fill="#fff"/><rect x="7" y="2" width="2" height="1" fill="#ffff00"/><rect x="9" y="2" width="3" height="1" fill="#fff"/><rect x="12" y="2" width="1" height="1" fill="#000"/><rect x="1" y="3" width="1" height="1" fill="#d4d0c8"/><rect x="2" y="3" width="2" height="1" fill="#808080"/><rect x="4" y="3" width="8" height="1" fill="#d4d0c8"/><rect x="12" y="3" width="1" height="1" fill="#000"/><rect x="0" y="4" width="1" height="1" fill="#000"/><rect x="1" y="4" width="3" height="1" fill="#d4d0c8"/><rect x="4" y="4" width="3" height="1" fill="#808080"/><rect x="7" y="4" width="5" height="1" fill="#d4d0c8"/><rect x="12" y="4" width="1" height="1" fill="#000"/><rect x="1" y="5" width="5" height="1" fill="#d4d0c8"/><rect x="6" y="5" width="2" height="1" fill="#808080"/><rect x="8" y="5" width="4" height="1" fill="#d4d0c8"/><rect x="12" y="5" width="1" height="1" fill="#000"/><rect x="1" y="6" width="4" height="1" fill="#d4d0c8"/><rect x="5" y="6" width="1" height="1" fill="#000"/><rect x="6" y="6" width="1" height="1" fill="#d4d0c8"/><rect x="7" y="6" width="1" height="1" fill="#000"/><rect x="8" y="6" width="4" height="1" fill="#d4d0c8"/><rect x="12" y="6" width="1" height="1" fill="#000"/><rect x="0" y="7" width="1" height="1" fill="#a00000"/><rect x="1" y="7" width="2" height="1" fill="#a8acac"/><rect x="3" y="7" width="1" height="1" fill="#a00000"/><rect x="4" y="7" width="1" height="1" fill="#000"/><rect x="5" y="7" width="2" height="1" fill="#fff"/><rect x="7" y="7" width="1" height="1" fill="#d4d0c8"/><rect x="8" y="7" width="1" height="1" fill="#000"/><rect x="9" y="7" width="2" height="1" fill="#a00000"/><rect x="11" y="7" width="1" height="1" fill="#a8acac"/><rect x="12" y="7" width="1" height="1" fill="#000"/><rect x="0" y="8" width="1" height="1" fill="#a00000"/><rect x="1" y="8" width="3" height="1" fill="#a8acac"/><rect x="4" y="8" width="1" height="1" fill="#a00000"/><rect x="5" y="8" width="1" height="1" fill="#fff"/><rect x="6" y="8" width="1" height="1" fill="#d4d0c8"/><rect x="7" y="8" width="1" height="1" fill="#fff"/><rect x="8" y="8" width="1" height="1" fill="#d4d0c8"/><rect x="9" y="8" width="3" height="1" fill="#a8acac"/><rect x="12" y="8" width="1" height="1" fill="#000"/><rect x="0" y="9" width="1" height="1" fill="#a00000"/><rect x="1" y="9" width="3" height="1" fill="#a8acac"/><rect x="4" y="9" width="1" height="1" fill="#d4d0c8"/><rect x="5" y="9" width="2" height="1" fill="#fff"/><rect x="7" y="9" width="1" height="1" fill="#d4d0c8"/><rect x="8" y="9" width="1" height="1" fill="#fff"/><rect x="9" y="9" width="1" height="1" fill="#a8acac"/><rect x="10" y="9" width="1" height="1" fill="#a00000"/><rect x="11" y="9" width="1" height="1" fill="#a8acac"/><rect x="12" y="9" width="1" height="1" fill="#000"/><rect x="0" y="10" width="1" height="1" fill="#a00000"/><rect x="1" y="10" width="3" height="1" fill="#a8acac"/><rect x="4" y="10" width="1" height="1" fill="#000"/><rect x="5" y="10" width="1" height="1" fill="#fff"/><rect x="6" y="10" width="1" height="1" fill="#d4d0c8"/><rect x="7" y="10" width="1" height="1" fill="#fff"/><rect x="8" y="10" width="1" height="1" fill="#a00000"/><rect x="9" y="10" width="3" height="1" fill="#a8acac"/><rect x="12" y="10" width="1" height="1" fill="#000"/><rect x="0" y="11" width="1" height="1" fill="#a00000"/><rect x="1" y="11" width="2" height="1" fill="#a8acac"/><rect x="3" y="11" width="1" height="1" fill="#a00000"/><rect x="4" y="11" width="1" height="1" fill="#fff"/><rect x="5" y="11" width="1" height="1" fill="#d4d0c8"/><rect x="6" y="11" width="1" height="1" fill="#fff"/><rect x="7" y="11" width="1" height="1" fill="#a00000"/><rect x="8" y="11" width="4" height="1" fill="#a8acac"/><rect x="12" y="11" width="1" height="1" fill="#000"/><rect x="0" y="12" width="1" height="1" fill="#a00000"/><rect x="1" y="12" width="3" height="1" fill="#a8acac"/><rect x="4" y="12" width="1" height="1" fill="#a00000"/><rect x="5" y="12" width="1" height="1" fill="#fff"/><rect x="6" y="12" width="1" height="1" fill="#a00000"/><rect x="7" y="12" width="5" height="1" fill="#a8acac"/><rect x="12" y="12" width="1" height="1" fill="#000"/><rect x="0" y="13" width="1" height="1" fill="#a00000"/><rect x="1" y="13" width="4" height="1" fill="#a8acac"/><rect x="5" y="13" width="1" height="1" fill="#a00000"/><rect x="6" y="13" width="6" height="1" fill="#a8acac"/><rect x="12" y="13" width="1" height="1" fill="#000"/><rect x="0" y="14" width="12" height="1" fill="#a00000"/><rect x="12" y="14" width="1" height="1" fill="#000"/><rect x="0" y="15" width="1" height="1" fill="#000"/><rect x="1" y="15" width="2" height="1" fill="#a00000"/><rect x="3" y="15" width="1" height="1" fill="#000"/><rect x="4" y="15" width="2" height="1" fill="#a00000"/><rect x="6" y="15" width="1" height="1" fill="#000"/><rect x="7" y="15" width="2" height="1" fill="#a00000"/><rect x="9" y="15" width="1" height="1" fill="#000"/><rect x="10" y="15" width="2" height="1" fill="#a00000"/><rect x="12" y="15" width="1" height="1" fill="#000"/></svg><div style="position:absolute;left:460px;top:378px;line-height:12px;white-space:nowrap;will-change:transform;font:bold 12px 'Liberation Sans',sans-serif;color:#d6d6ce;letter-spacing:0.04px">user.betty.rpcHandlers.testing</div><div style="position:absolute;left:655px;top:378px;width:16px;height:14px;background:#d6d6ce"></div><div style="position:absolute;left:655px;top:378px;width:15px;height:1px;background:#fff"></div><div style="position:absolute;left:655px;top:378px;width:1px;height:13px;background:#fff"></div><div style="position:absolute;left:656px;top:390px;width:14px;height:1px;background:#808080"></div><div style="position:absolute;left:669px;top:379px;width:1px;height:12px;background:#808080"></div><div style="position:absolute;left:655px;top:391px;width:16px;height:1px;background:#000"></div><div style="position:absolute;left:670px;top:378px;width:1px;height:14px;background:#000"></div><div style="position:absolute;left:659px;top:387px;width:6px;height:2px;background:#000"></div><div style="position:absolute;left:671px;top:378px;width:16px;height:14px;background:#d6d6ce"></div><div style="position:absolute;left:671px;top:378px;width:15px;height:1px;background:#fff"></div><div style="position:absolute;left:671px;top:378px;width:1px;height:13px;background:#fff"></div><div style="position:absolute;left:672px;top:390px;width:14px;height:1px;background:#808080"></div><div style="position:absolute;left:685px;top:379px;width:1px;height:12px;background:#808080"></div><div style="position:absolute;left:671px;top:391px;width:16px;height:1px;background:#000"></div><div style="position:absolute;left:686px;top:378px;width:1px;height:14px;background:#000"></div><div style="position:absolute;left:674px;top:380px;width:9px;height:9px;box-sizing:border-box;border:1px solid #000;border-top-width:2px"></div><div style="position:absolute;left:689px;top:378px;width:16px;height:14px;background:#d6d6ce"></div><div style="position:absolute;left:689px;top:378px;width:15px;height:1px;background:#fff"></div><div style="position:absolute;left:689px;top:378px;width:1px;height:13px;background:#fff"></div><div style="position:absolute;left:690px;top:390px;width:14px;height:1px;background:#808080"></div><div style="position:absolute;left:703px;top:379px;width:1px;height:12px;background:#808080"></div><div style="position:absolute;left:689px;top:391px;width:16px;height:1px;background:#000"></div><div style="position:absolute;left:704px;top:378px;width:1px;height:14px;background:#000"></div><svg style="position:absolute;left:693px;top:381px" width="8" height="7" shape-rendering="crispEdges"><path fill="#000" d="M0 0h2v1h-2zM6 0h2v1h-2zM1 1h2v1h-2zM5 1h2v1h-2zM2 2h4v1h-4zM3 3h2v1h-2zM2 4h4v1h-4zM1 5h2v1h-2zM5 5h2v1h-2zM0 6h2v1h-2zM6 6h2v1h-2z"/></svg><div style="position:absolute;left:482px;top:400px;width:50px;height:1px;background:#fff"></div><div style="position:absolute;left:482px;top:400px;width:1px;height:16px;background:#fff"></div><div style="position:absolute;left:532px;top:400px;width:2px;height:18px;background:#000"></div><div style="position:absolute;left:482px;top:416px;width:52px;height:2px;background:#000"></div><div style="position:absolute;left:482px;width:50px;text-align:center;top:401px;line-height:12px;white-space:nowrap;will-change:transform;font:12px 'Liberation Sans',sans-serif;color:#000;letter-spacing:-0.5px">Run</div><div style="position:absolute;left:541px;top:400px;width:50px;height:1px;background:#fff"></div><div style="position:absolute;left:541px;top:400px;width:1px;height:16px;background:#fff"></div><div style="position:absolute;left:591px;top:400px;width:2px;height:18px;background:#000"></div><div style="position:absolute;left:541px;top:416px;width:52px;height:2px;background:#000"></div><div style="position:absolute;left:541px;width:50px;text-align:center;top:401px;line-height:12px;white-space:nowrap;will-change:transform;font:12px 'Liberation Sans',sans-serif;color:#000;letter-spacing:-0.5px">Debug</div><div style="position:absolute;left:600px;top:400px;width:50px;height:1px;background:#fff"></div><div style="position:absolute;left:600px;top:400px;width:1px;height:16px;background:#fff"></div><div style="position:absolute;left:650px;top:400px;width:2px;height:18px;background:#000"></div><div style="position:absolute;left:600px;top:416px;width:52px;height:2px;background:#000"></div><div style="position:absolute;left:600px;width:50px;text-align:center;top:401px;line-height:12px;white-space:nowrap;will-change:transform;font:12px 'Liberation Sans',sans-serif;color:#000;letter-spacing:-0.8px"><span style="color:transparent;background-image:conic-gradient(#000 25%,transparent 0 50%,#000 0 75%,transparent 0);background-size:2px 2px;-webkit-background-clip:text;background-clip:text">Compile</span></div><div style="position:absolute;left:441px;top:423px;width:250px;height:69px;box-sizing:border-box;background:#fff;border-left:1px solid #000;border-top:1px solid #000"></div><svg style="position:absolute;left:691px;top:395px" width="16" height="98" shape-rendering="crispEdges"><rect width="16" height="98" fill="url(#pc)"/></svg><svg style="position:absolute;left:691px;top:395px" width="16" height="16" shape-rendering="crispEdges"><rect width="16" height="16" fill="url(#pf)"/></svg><div style="position:absolute;left:691px;top:395px;width:15px;height:1px;background:#d6d6ce"></div><div style="position:absolute;left:691px;top:395px;width:1px;height:15px;background:#d6d6ce"></div><div style="position:absolute;left:692px;top:396px;width:13px;height:1px;background:#fff"></div><div style="position:absolute;left:692px;top:396px;width:1px;height:13px;background:#fff"></div><div style="position:absolute;left:691px;top:410px;width:16px;height:1px;background:#000"></div><div style="position:absolute;left:706px;top:395px;width:1px;height:16px;background:#000"></div><svg style="position:absolute;left:695px;top:401px" width="7" height="4" shape-rendering="crispEdges"><path fill="#808080" d="M3 0h1v1h-1zM2 1h3v1h-3zM1 2h5v1h-5zM0 3h7v1h-7z"/></svg><div style="position:absolute;left:697px;top:405px;width:5px;height:1px;background:#fff"></div><svg style="position:absolute;left:691px;top:476px" width="16" height="16" shape-rendering="crispEdges"><rect width="16" height="16" fill="url(#pf)"/></svg><div style="position:absolute;left:691px;top:476px;width:15px;height:1px;background:#d6d6ce"></div><div style="position:absolute;left:691px;top:476px;width:1px;height:15px;background:#d6d6ce"></div><div style="position:absolute;left:692px;top:477px;width:13px;height:1px;background:#fff"></div><div style="position:absolute;left:692px;top:477px;width:1px;height:13px;background:#fff"></div><div style="position:absolute;left:691px;top:491px;width:16px;height:1px;background:#000"></div><div style="position:absolute;left:706px;top:476px;width:1px;height:16px;background:#000"></div><svg style="position:absolute;left:695px;top:481px" width="7" height="4" shape-rendering="crispEdges"><path fill="#808080" d="M0 0h7v1h-7zM1 1h5v1h-5zM2 2h3v1h-3zM3 3h1v1h-1z"/></svg><div style="position:absolute;left:701px;top:482px;width:1px;height:2px;background:#fff"></div><div style="position:absolute;left:700px;top:484px;width:1px;height:1px;background:#fff"></div><div style="position:absolute;left:444px;top:428px;width:138px;height:16px;box-sizing:border-box;border:1px solid #808080"></div><svg style="position:absolute;left:450px;top:432px" width="5" height="9" shape-rendering="crispEdges"><path fill="#c4c4c4" d="M0 0h1v9h-1zM1 1h1v7h-1zM2 2h1v5h-1zM3 3h1v3h-1zM4 4h1v1h-1z"/><path fill="#808080" d="M1 3h1v1h-1zM0 6h1v1h-1z"/></svg><div style="position:absolute;left:465px;top:429px;line-height:13px;white-space:nowrap;will-change:transform;font:normal 13px 'Liberation Sans',sans-serif;color:#000;letter-spacing:0.06px;">return (clock.now ())</div></body></html>
